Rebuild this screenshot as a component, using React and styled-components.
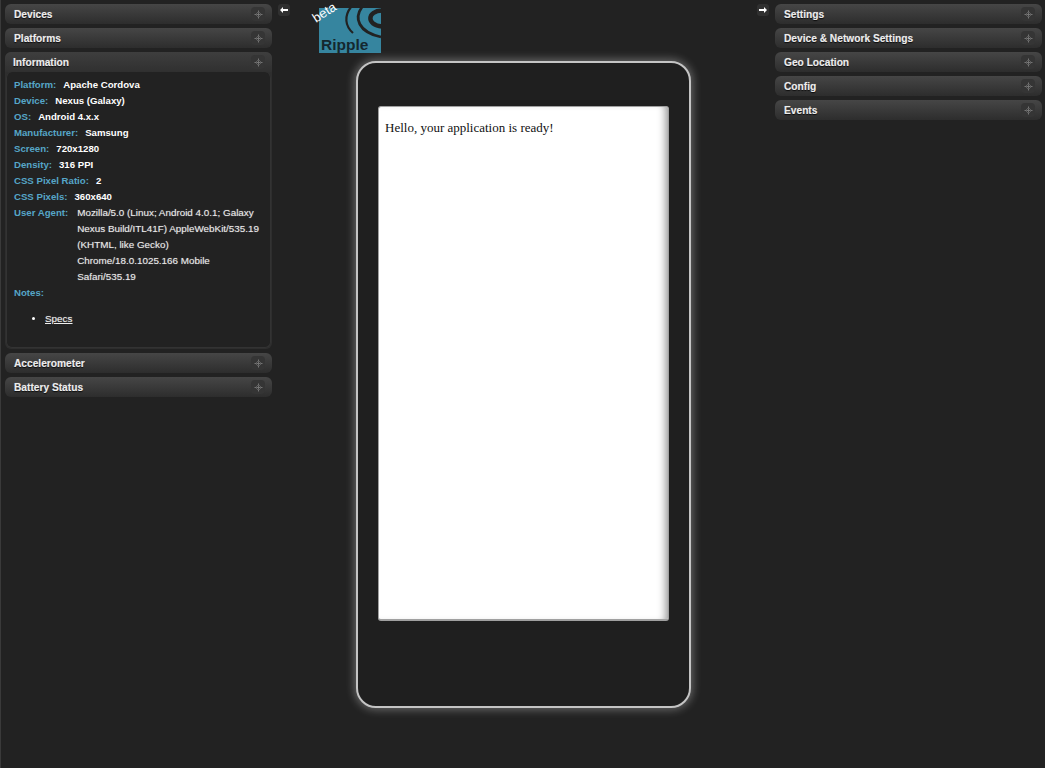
import React from "react";
import styled, { createGlobalStyle } from "styled-components";

const GlobalStyle = createGlobalStyle`
  html, body {
    margin: 0;
    padding: 0;
    height: 100%;
    background: #222;
  }
  body {
    font-family: "Liberation Sans", Arial, sans-serif;
    font-size: 10px;
    overflow: hidden;
  }
`;

const Page = styled.div`
  display: flex;
  width: 1045px;
  height: 768px;
  background: #222;
  border-left: 1px solid #3a3a3a;
  box-sizing: border-box;
`;

const Side = styled.div`
  flex: none;
  width: ${(p) => p.$width}px;
  padding: 4px ${(p) => p.$right}px 0 ${(p) => p.$left}px;
  box-sizing: border-box;
  display: flex;
  flex-direction: column;
  gap: 4px;
`;

const PanelHead = styled.div`
  height: 20px;
  display: flex;
  align-items: center;
  justify-content: space-between;
  padding: 0 7px 0 9px;
  border-radius: 6px;
  background: linear-gradient(#464646, #2d2d2d);
  color: #ececec;
  font-weight: bold;
  font-size: 10.2px;
  text-shadow: 0 0 1px rgba(255, 255, 255, 0.4), 0 1px 1px #000;
  box-sizing: border-box;
`;

const PlusBox = styled.span`
  width: 14px;
  height: 14px;
  border-radius: 4px;
  background: #353535;
  display: flex;
  align-items: center;
  justify-content: center;
`;

const OpenPanel = styled.div`
  display: flex;
  flex-direction: column;
  background: #2e2e2e;
  border-radius: 6px;
`;

const OpenHead = styled(PanelHead)`
  background: linear-gradient(#3e3e3e, #303030);
  border-radius: 6px 6px 0 0;
  padding-left: 8px;
`;

const InfoBody = styled.div`
  margin: 0 1px 1px;
  height: 276px;
  padding: 5px 7px 0;
  box-sizing: border-box;
  background: #222;
  border-radius: 6px;
  border: 1px solid #333;
  border-top: none;
`;

const Row = styled.div`
  display: flex;
  line-height: 16px;
  font-size: 9.65px;
  font-weight: bold;
  color: #fff;
`;

const Label = styled.span`
  flex: none;
  color: #56a6c8;
  margin-right: ${(p) => (p.$wide ? "9px" : "7px")};
`;

const Value = styled.span`
  display: block;
  width: ${(p) => (p.$wrap ? "186px" : "auto")};
  color: ${(p) => (p.$wrap ? "#e8e8e8" : "#fff")};
  font-weight: ${(p) => (p.$wrap ? "normal" : "bold")};
  font-size: ${(p) => (p.$wrap ? "9.87px" : "inherit")};
  text-shadow: ${(p) => (p.$wrap ? "0 0 1px rgba(255, 255, 255, 0.45)" : "none")};
`;

const NotesList = styled.ul`
  margin: 10px 0 0;
  padding: 0 0 0 31px;
  color: #fff;
  line-height: 16px;
  font-size: 9.87px;
`;

const SpecLink = styled.a`
  color: #eee;
  text-decoration: underline;
  text-shadow: 0 0 1px rgba(255, 255, 255, 0.45);
`;

const Center = styled.div`
  flex: 1;
  display: flex;
  flex-direction: column;
  min-width: 0;
`;

const TopBar = styled.div`
  height: 54px;
  display: flex;
  align-items: flex-start;
  padding: 4px 6px 0;
`;

const ArrowBtn = styled.span`
  flex: none;
  width: 12px;
  height: 12px;
  border-radius: 3px;
  background: #303030;
  color: #fff;
  display: flex;
  align-items: center;
  justify-content: center;
  margin-left: ${(p) => (p.$end ? "auto" : "0")};
`;

const LogoWrap = styled.div`
  flex: none;
  width: 70px;
  height: 56px;
  margin: -4px 0 0 23px;
`;

const Device = styled.div`
  width: 335px;
  height: 647px;
  margin: 3px 0 0 84px;
  box-sizing: border-box;
  border: 2px solid #c4c4c4;
  border-radius: 20px;
  background: #1f1f1f;
  box-shadow: 0 0 8px 2px rgba(255, 255, 255, 0.3);
  padding: 43px 20px 0;
`;

const Screen = styled.div`
  width: 291px;
  height: 515px;
  box-sizing: border-box;
  background: #fff;
  border: 1px solid #a0a0a0;
  border-bottom-width: 2px;
  border-radius: 3px;
  box-shadow: inset -8px 0 8px -6px rgba(0, 0, 0, 0.45);
  padding: 13px 6px;
  font-family: "Liberation Serif", "Times New Roman", serif;
  font-size: 13px;
  line-height: 16px;
  color: #111;
`;

const leftPanels = ["Devices", "Platforms"];
const leftAfter = ["Accelerometer", "Battery Status"];
const rightPanels = ["Settings", "Device & Network Settings", "Geo Location", "Config", "Events"];

const infoRows = [
  ["Platform:", "Apache Cordova"],
  ["Device:", "Nexus (Galaxy)"],
  ["OS:", "Android 4.x.x"],
  ["Manufacturer:", "Samsung"],
  ["Screen:", "720x1280"],
  ["Density:", "316 PPI"],
  ["CSS Pixel Ratio:", "2"],
  ["CSS Pixels:", "360x640"],
];

function Plus() {
  return (
    <PlusBox>
      <svg width="9" height="9" viewBox="0 0 9 9">
        <path d="M4.5 0.5v8M0.5 4.5h8" stroke="#757575" strokeWidth="1" fill="none" />
        <path d="M3 2.5h3M3 6.5h3M2.5 3v3M6.5 3v3" stroke="#5c5c5c" strokeWidth="1" fill="none" />
      </svg>
    </PlusBox>
  );
}

function Panel({ title }) {
  return (
    <PanelHead>
      {title}
      <Plus />
    </PanelHead>
  );
}

function Arrow({ flip }) {
  return (
    <ArrowBtn $end={flip}>
      <svg width="8" height="6" viewBox="0 0 8 6" transform={flip ? "scale(-1 1)" : undefined}>
        <path d="M0 3l3-3v2h5v2H3v2z" fill="#fff" />
      </svg>
    </ArrowBtn>
  );
}

function Logo() {
  return (
    <svg width="70" height="56" viewBox="0 0 70 56" style={{ overflow: "visible" }}>
      <rect x="6" y="8" width="62" height="45" fill="#36859f" />
      <path d="M38 7C31 16 32 26 40 33" stroke="#222" strokeWidth="2.2" fill="none" />
      <path d="M49 7C41 18 45 32 68 37" stroke="#222" strokeWidth="2.8" fill="none" />
      <path d="M69 10.5C54 11 53 25 69 26.5" stroke="#222" strokeWidth="4.5" fill="none" />
      <text x="8" y="50" fontFamily="Liberation Sans, Arial, sans-serif" fontWeight="bold" fontSize="15.5" fill="#14282f">Ripple</text>
      <text x="3" y="23" fontFamily="Liberation Sans, Arial, sans-serif" fontSize="13" fill="#fff" transform="rotate(-33 3 23)">beta</text>
    </svg>
  );
}

export default function App() {
  return (
    <>
      <GlobalStyle />
      <Page>
        <Side $width={271} $left={4} $right={0}>
          {leftPanels.map((t) => (
            <Panel key={t} title={t} />
          ))}
          <OpenPanel>
            <OpenHead>
              Information
              <Plus />
            </OpenHead>
            <InfoBody>
              {infoRows.map(([k, v]) => (
                <Row key={k}>
                  <Label>{k}</Label>
                  <Value>{v}</Value>
                </Row>
              ))}
              <Row>
                <Label $wide>User Agent:</Label>
                <Value $wrap>
                  Mozilla/5.0 (Linux; Android 4.0.1; Galaxy Nexus Build/ITL41F) AppleWebKit/535.19 (KHTML, like Gecko) Chrome/18.0.1025.166 Mobile Safari/535.19
                </Value>
              </Row>
              <Row>
                <Label>Notes:</Label>
              </Row>
              <NotesList>
                <li>
                  <SpecLink>Specs</SpecLink>
                </li>
              </NotesList>
            </InfoBody>
          </OpenPanel>
          {leftAfter.map((t) => (
            <Panel key={t} title={t} />
          ))}
        </Side>
        <Center>
          <TopBar>
            <Arrow />
            <LogoWrap>
              <Logo />
            </LogoWrap>
            <Arrow flip />
          </TopBar>
          <Device>
            <Screen>Hello, your application is ready!</Screen>
          </Device>
        </Center>
        <Side $width={270} $left={0} $right={3}>
          {rightPanels.map((t) => (
            <Panel key={t} title={t} />
          ))}
        </Side>
      </Page>
    </>
  );
}
